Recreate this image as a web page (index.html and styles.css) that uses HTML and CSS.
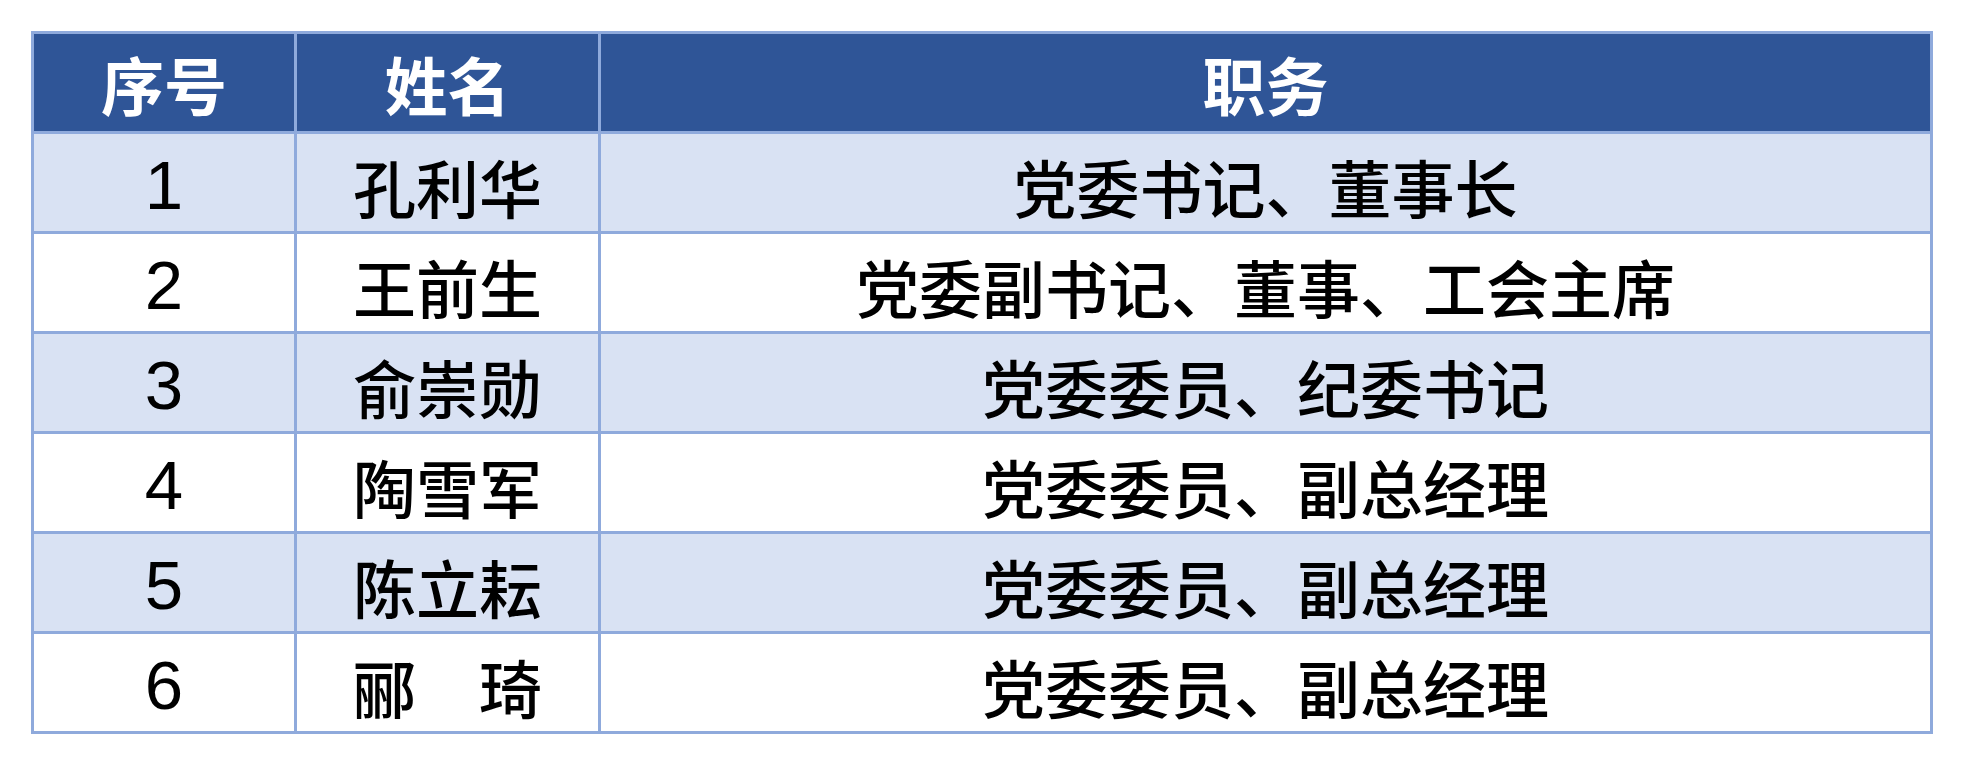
FILE: index.html
```html
<!DOCTYPE html>
<html lang="zh-CN">
<head>
<meta charset="utf-8">
<title>领导班子</title>
<link rel="stylesheet" href="styles.css">
</head>
<body>
<table class="roster">
  <colgroup>
    <col class="c-no">
    <col class="c-name">
    <col class="c-role">
  </colgroup>
  <thead>
    <tr><th>序号</th><th>姓名</th><th>职务</th></tr>
  </thead>
  <tbody>
    <tr class="band"><td class="num">1</td><td>孔利华</td><td>党委书记、董事长</td></tr>
    <tr><td class="num">2</td><td>王前生</td><td>党委副书记、董事、工会主席</td></tr>
    <tr class="band"><td class="num">3</td><td>俞崇勋</td><td>党委委员、纪委书记</td></tr>
    <tr><td class="num">4</td><td>陶雪军</td><td>党委委员、副总经理</td></tr>
    <tr class="band"><td class="num">5</td><td>陈立耘</td><td>党委委员、副总经理</td></tr>
    <tr><td class="num">6</td><td>郦　琦</td><td>党委委员、副总经理</td></tr>
  </tbody>
</table>
</body>
</html>
```

FILE: styles.css
```css
html, body {
  margin: 0;
  padding: 0;
  background: #ffffff;
}

body {
  padding: 31px 0 0 31px;
  font-family: "Noto Sans CJK SC", "Noto Sans", sans-serif;
}

.roster {
  table-layout: fixed;
  border-collapse: separate;
  border-spacing: 3px;
  background: #8faadc;
  width: 1902px;
}

.c-no { width: 260px; }
.c-name { width: 301px; }
.c-role { width: 1329px; }

.roster th,
.roster td {
  height: 97px;
  padding: 5px 0 0 0;
  box-sizing: border-box;
  text-align: center;
  vertical-align: middle;
  font-size: 63px;
  font-weight: 500;
  line-height: 1;
  color: #000000;
  background: #ffffff;
  white-space: nowrap;
}

.roster th {
  background: #2f5597;
  color: #ffffff;
  font-weight: 700;
  padding-top: 0;
}

.roster tr.band td {
  background: #d9e2f3;
}

.roster td.num {
  font-family: "Liberation Sans", Arial, sans-serif;
  font-weight: 400;
  font-size: 69px;
}
```
